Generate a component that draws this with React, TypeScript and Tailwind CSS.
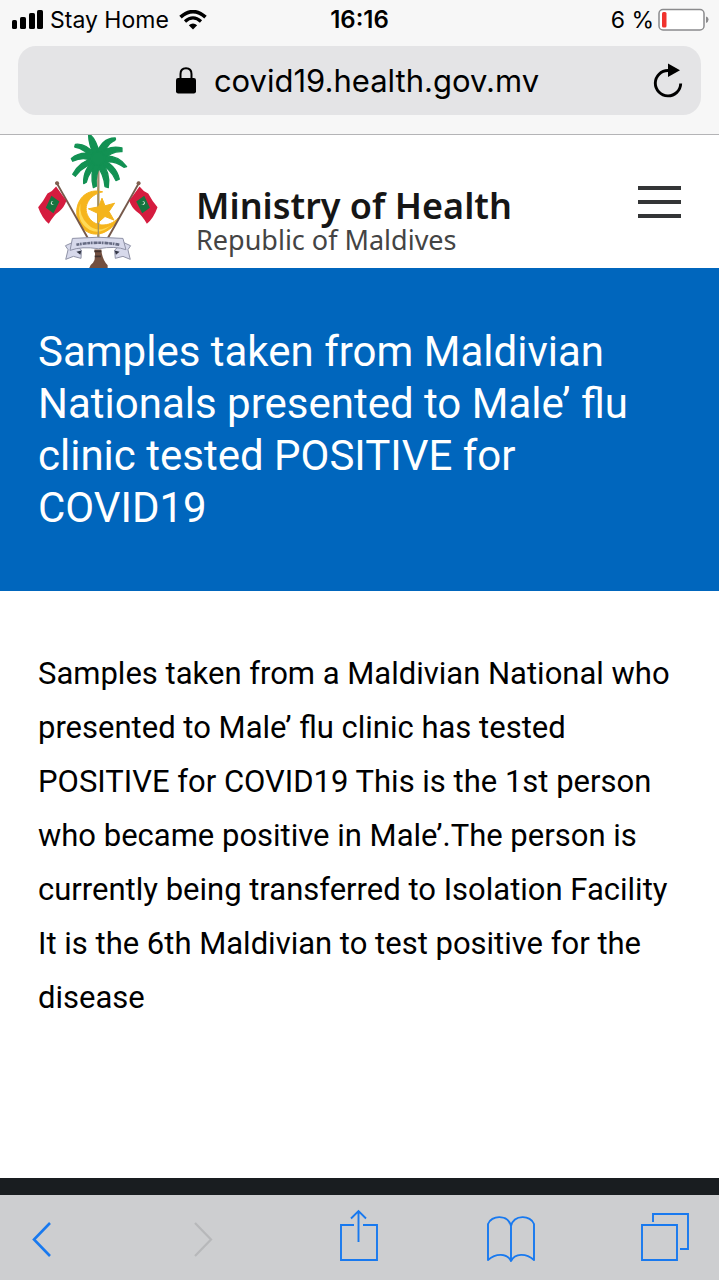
import React from "react";

function StatusBar() {
  return (
    <div className="grid h-10 grid-cols-3 items-center px-3 text-[23px] leading-10 text-black">
      <div className="flex items-center whitespace-nowrap">
        <svg className="h-5 w-8 shrink-0" viewBox="0 0 32 20" aria-label="Signal strength">
          <rect x="0" y="10" width="5" height="9" rx="1.6" />
          <rect x="8" y="7" width="6" height="12" rx="1.6" />
          <rect x="17" y="3" width="6" height="16" rx="1.6" />
          <rect x="25" y="0" width="6" height="19" rx="1.6" />
        </svg>
        <span className="ml-1.5">Stay Home</span>
        <svg className="ml-2.5 h-5 w-7 shrink-0" viewBox="0 0 28 20" fill="none" stroke="#000" aria-label="Wi-Fi">
          <path d="M1.5 7.2Q14 -4 26.5 7.2" strokeWidth="3.6" />
          <path d="M6 11.4Q14 4.4 22 11.4" strokeWidth="3.3" />
          <path d="M9.8 15.2Q14 11.8 18.2 15.2L14 19.5Z" fill="#000" stroke="none" />
        </svg>
      </div>
      <div className="text-center text-[24px] font-semibold">16:16</div>
      <div className="flex items-center justify-end whitespace-nowrap">
        <span>6 %</span>
        <svg className="-mr-0.5 ml-1 h-6 w-[51px] shrink-0" viewBox="0 0 51 24" aria-label="Battery">
          <rect x="1" y="1.5" width="45" height="20.5" rx="4" fill="#fff" stroke="#8b8b8d" strokeWidth="1.5" />
          <rect x="4" y="4" width="4.5" height="15.500" rx="1.5" fill="#f0332e" />
          <path d="M48 8.5Q50.5 9 50.5 11.5T48 15Z" fill="#8b8b8d" />
        </svg>
      </div>
    </div>
  );
}

function AddressBar() {
  return (
    <div className="mx-[18px] mt-1.5 flex h-[69px] items-center rounded-[18px] bg-[#e4e4e6] pl-11 pr-[18px]">
      <div className="flex flex-1 items-center justify-center">
        <svg className="mr-[18px] h-[27px] w-5" viewBox="0 0 20 27" aria-label="Secure">
          <path d="M4.5 12V7Q4.5 1.2 10 1.2T15.5 7V12" fill="none" stroke="#000" strokeWidth="2" />
          <rect x="0" y="11" width="20" height="15.5" rx="2.2" />
        </svg>
        <span className="text-[31px] leading-10 text-black">covid19.health.gov.mv</span>
      </div>
      <button type="button" aria-label="Reload" className="shrink-0">
        <svg className="h-9 w-[30px]" viewBox="0 0 30 36" fill="none">
          <path d="M15 7.5A12.7 12.7 0 1 0 27.7 20.5" stroke="#000" strokeWidth="2.9" />
          <path d="M15 0.5L27 7.2L15 14Z" fill="#000" />
        </svg>
      </button>
    </div>
  );
}

function Flag() {
  return (
    <g>
      <path d="M78 156L174 326" stroke="#76594b" strokeWidth="6" />
      <circle cx="81" cy="160" r="6" fill="#806050" />
      <path d="M78 170Q68 184 52 191Q40 214 24 232Q35 264 56 282Q70 256 88 244Q101 235 109 213Z" fill="#d51c3f" />
      <path d="M64 198L88 215L70 250L47 234Z" fill="#16743f" />
      <path d="M70 214A6 6 0 1 0 73 223A5 5 0 1 1 70 214" fill="#e8f3e9" />
    </g>
  );
}

function Emblem() {
  return (
    <svg className="h-[133px] w-[120px] shrink-0" viewBox="24 15 360 400" fill="none" aria-label="Emblem of Maldives">
      <path d="M205 100V330" stroke="#9c8b70" strokeWidth="7" />
      <g fill="#129153" stroke="#129153" strokeWidth="4" strokeLinejoin="round">
        <path d="M176 12Q197 22 209 73L193 82Q174 35 176 12Z" />
        <path d="M197 78Q215 23 256 24Q259 31 249 34Q230 42 216 88Z" />
        <path d="M202 76Q238 43 276 54L276 65Q244 63 216 94Z" />
        <path d="M207 80Q262 70 290 110L282 112Q250 88 211 99Z" />
        <path d="M209 86Q259 104 268 148L258 152Q242 113 204 100Z" />
        <path d="M211 90Q243 128 235 173L225 170Q222 134 198 101Z" />
        <path d="M198 76Q168 39 136 43L134 51Q164 55 190 91Z" />
        <path d="M201 76Q153 60 124 86L128 94Q162 77 200 97Z" />
        <path d="M199 82Q149 92 128 133L136 139Q160 102 206 100Z" />
        <path d="M197 87Q158 117 161 161L169 157Q175 126 209 98Z" />
        <path d="M197 89Q179 134 190 173L199 169Q195 134 216 94Z" />
        <circle cx="204" cy="86" r="20" />
      </g>
      <path d="M218 186C174 174 139 205 140 249C141 298 184 325 222 308C246 297 261 279 265 264C238 295 191 292 174 259C158 229 177 195 218 186Z" fill="#f6b51d" stroke="#f6b51d" strokeWidth="3" />
      <path d="M151 221Q135 273 178 300Q211 317 244 286Q204 314 174 284Q147 261 151 221Z" fill="#ffda58" />
      <path d="M205 175V320" stroke="#a99255" strokeWidth="4" />
      <path d="M216 205L225 228L254 220L237 245L252 271L225 260L204 279L204 251L175 237L206 231Z" fill="#f4b41c" stroke="#f4b41c" strokeWidth="3" />
      <Flag />
      <g transform="translate(407 0) scale(-1 1)"><Flag /></g>
      <path d="M193 359H214Q216 389 233 407V417H177Q180 405 189 399Q199 386 193 359Z" fill="#735040" />
      <path d="M193 365H214M194 380H213" stroke="#42322e" strokeWidth="5" />
      <g fill="#d7d9eb" stroke="#8f92a6" strokeWidth="3">
        <path d="M128 338L106 348L114 360L107 389L130 380L153 386L154 361Z" />
        <path d="M280 338L302 348L294 360L301 389L279 380L256 386L254 361Z" />
        <path d="M127 326Q204 319 279 326L288 360Q257 348 205 357Q155 349 120 362Z" />
      </g>
      <path d="M139 345Q203 333 268 345" stroke="#666b82" strokeWidth="8" strokeDasharray="9 2 5 3 12 2" />
      <path d="M139 366L154 362L151 375ZM269 366L254 362L258 375Z" fill="#333746" />
    </svg>
  );
}

function SiteHeader() {
  return (
    <header className="flex h-[133px] items-center justify-between bg-white px-[38px]">
      <a href="#home" className="flex items-center">
        <Emblem />
        <span className="ml-[38px] flex flex-col whitespace-nowrap pt-9 font-['Noto_Sans',sans-serif]">
          <span className="text-[36px] font-semibold leading-10 text-[#161616]">Ministry of Health</span>
          <span className="text-[27px] leading-7 text-[#444]">Republic of Maldives</span>
        </span>
      </a>
      <button type="button" aria-label="Open menu" className="flex w-[43px] flex-col gap-[10px]">
        <span className="h-1 w-full bg-[#333536]" />
        <span className="h-1 w-full bg-[#333536]" />
        <span className="h-1 w-full bg-[#333536]" />
      </button>
    </header>
  );
}

function BrowserToolbar() {
  return (
    <nav aria-label="Browser" className="flex h-[85px] items-start justify-between bg-[#cdced0] pl-8 pr-[30px] pt-3 text-[#1879ef]">
      <button type="button" aria-label="Back" className="w-14">
        <svg className="h-14 w-5" viewBox="0 0 20 56" fill="none" stroke="currentColor" strokeWidth="2.6">
          <path d="M18 16L2 32.5L18 49" />
        </svg>
      </button>
      <button type="button" aria-label="Forward" disabled className="w-10 text-[#b7b8ba]">
        <svg className="h-14 w-5" viewBox="0 0 20 56" fill="none" stroke="currentColor" strokeWidth="2.2">
          <path d="M1 16L17 32.5L1 49" />
        </svg>
      </button>
      <button type="button" aria-label="Share" className="w-[42px]">
        <svg className="h-14 w-[38px]" viewBox="0 0 38 56" fill="none" stroke="currentColor" strokeWidth="1.9">
          <path d="M14 18H1V53H37V18H23M18.5 35V4M11 11.5L18.5 4L26 11.5" />
        </svg>
      </button>
      <button type="button" aria-label="Bookmarks" className="w-12">
        <svg className="h-14 w-12" viewBox="0 0 48 56" fill="none" stroke="currentColor" strokeWidth="1.9" strokeLinejoin="round">
          <path d="M24 19C21 7 4 8 1 17V53C9 46 20 46 24 54C28 46 39 46 47 53V17C44 8 27 7 24 19V54" />
        </svg>
      </button>
      <button type="button" aria-label="Tabs" className="w-12">
        <svg className="h-14 w-12" viewBox="0 0 48 56" fill="none" stroke="currentColor" strokeWidth="1.9">
          <path d="M1 18H36V53H1ZM12 15V7H47V42H39" />
        </svg>
      </button>
    </nav>
  );
}

export default function App() {
  return (
    <div className="flex min-h-screen flex-col bg-white font-[Inter,sans-serif]">
      <div className="border-b border-[#b4b4b6] bg-[#f7f7f7] pb-[19px]">
        <StatusBar />
        <AddressBar />
      </div>
      <SiteHeader />
      <main className="flex-1 font-[Roboto,sans-serif]">
        <div className="bg-[#0066bd] px-[38px] pb-[57px] pt-[58px]">
          <h1 className="text-[42px] leading-[52px] text-white">
            Samples taken from Maldivian Nationals presented to Male’ flu clinic tested POSITIVE for COVID19
          </h1>
        </div>
        <p className="px-[38px] py-14 text-[31px] leading-[54px] text-black">
          Samples taken from a Maldivian National who presented to Male’ flu clinic has tested POSITIVE for COVID19
          This is the 1st person who became positive in Male’.The person is currently being transferred to Isolation
          Facility It is the 6th Maldivian to test positive for the disease
        </p>
      </main>
      <div className="h-[17px] bg-[#191d20]" />
      <BrowserToolbar />
    </div>
  );
}
